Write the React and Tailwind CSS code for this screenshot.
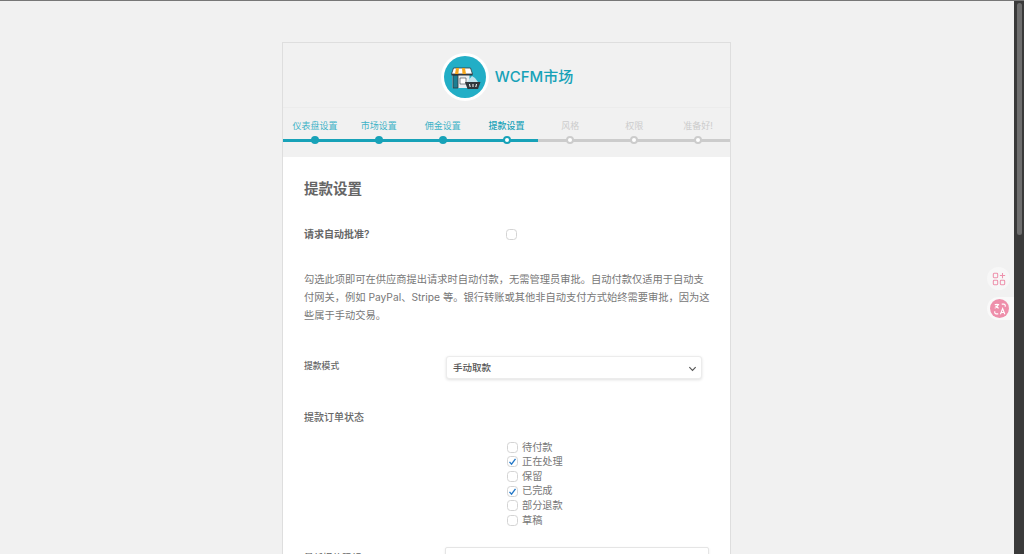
import React from "react";

const font = { fontFamily: '"Inter", "Noto Sans CJK SC", sans-serif' };

const steps = [
  { name: "仪表盘设置", state: "done" },
  { name: "市场设置", state: "done" },
  { name: "佣金设置", state: "done" },
  { name: "提款设置", state: "active" },
  { name: "风格", state: "todo" },
  { name: "权限", state: "todo" },
  { name: "准备好!", state: "todo" },
];

const statuses = [
  { name: "待付款", checked: false },
  { name: "正在处理", checked: true },
  { name: "保留", checked: false },
  { name: "已完成", checked: true },
  { name: "部分退款", checked: false },
  { name: "草稿", checked: false },
];

const Logo = () => (
  <svg viewBox="0 0 48 48" className="w-[48px] h-[48px] shrink-0">
    <circle cx="24" cy="24" r="24" fill="#ffffff" />
    <circle cx="24" cy="24" r="21" fill="#22aec6" />
    <path d="M11.500 22h17v13h-17z" fill="#e9edf0" />
    <path d="M12 22h5v13h-5z" fill="#1b7f93" stroke="#30383d" strokeWidth="0.8" />
    <path d="M19 25h6v6h-6z" fill="#ffffff" stroke="#30383d" strokeWidth="0.6" />
    <path d="M12.500 15h17l2 6h-21z" fill="#ffffff" stroke="#30383d" strokeWidth="0.8" />
    <path d="M15 15h3l-0.700 6h-3.300zM21 15h3l1 6h-3.500z" fill="#f5a81f" />
    <path d="M10.500 21h21v1.500h-21z" fill="#30383d" />
    <path d="M26 29l5-6 3 2 3 4z" fill="#bfe3ec" />
    <path d="M24 29h15.500l-2.500 7h-10.500z" fill="#30383d" />
    <path d="M28.500 31l0.700 3M32 31v3M35.500 31l-0.700 3" stroke="#ffffff" strokeWidth="1" fill="none" />
  </svg>
);

const Box = ({ checked }) => (
  <span className="w-[11px] h-[11px] rounded-[3.500px] border border-[#d4d4d4] bg-white shrink-0 flex items-center justify-center">
    {checked && (
      <svg viewBox="0 0 12 12" className="w-[9px] h-[9px]">
        <path d="M2 6.500l2.700 3L10 2.500" fill="none" stroke="#2378c8" strokeWidth="1.800" />
      </svg>
    )}
  </span>
);

const Step = ({ name, state }) => {
  const lit = state !== "todo";
  return (
    <div className="w-[64px] flex flex-col items-center">
      <div
        className={
          "h-[16px] leading-[16px] text-[9px] whitespace-nowrap " +
          (state === "active" ? "text-[#17a2b8] font-medium" : lit ? "text-[#3eb3c7]" : "text-[#cccccc]")
        }
      >
        {name}
      </div>
      <div className="relative w-full h-[8px] mt-[2px] flex items-center justify-center">
        <div className={"absolute left-0 right-0 h-[3px] " + (lit ? "bg-[#17a2b8]" : "bg-[#cccccc]")} />
        {state === "done" && <span className="relative w-[8px] h-[8px] rounded-full bg-[#17a2b8]" />}
        {state === "active" && <span className="relative w-[8px] h-[8px] rounded-full bg-white border-2 border-[#17a2b8]" />}
        {state === "todo" && <span className="relative w-[8px] h-[8px] rounded-full bg-white border-2 border-[#cccccc]" />}
      </div>
    </div>
  );
};

export default function App() {
  return (
    <div className="relative h-[554px] w-[1024px] overflow-hidden flex bg-[#f1f1f1] text-[#666666] border-t border-[#777777]" style={font}>
      <div className="flex-1 pt-[41px] flex justify-center">
        <div className="w-[449px] ml-[-1px] border border-[#dedede] border-b-0 flex flex-col">
          <div className="h-[65px] shrink-0 flex items-start pt-[10px] justify-center gap-[6px] pl-[1px] border-b border-[#ececec]">
            <Logo />
            <span className="text-[#17a2b8] text-[15px] leading-[48px] font-medium">WCFM市场</span>
          </div>

          <div className="h-[49px] shrink-0 flex pt-[10px]">
            {steps.map((s) => (
              <Step key={s.name} name={s.name} state={s.state} />
            ))}
          </div>

          <div className="flex-1 bg-white px-[21px] pt-[22px]">
            <h1 className="text-[14.500px] leading-[20px] font-semibold text-[#666666]">提款设置</h1>

            <div className="flex items-center h-[14px] mt-[28px]">
              <div className="w-[202px] text-[10px] font-semibold text-[#666666]">请求自动批准?</div>
              <Box />
            </div>

            <p className="mt-[29px] w-[406px] text-[10.250px] leading-[18px] text-[#777777]">
              勾选此项即可在供应商提出请求时自动付款，无需管理员审批。自动付款仅适用于自动支付网关，例如 PayPal、Stripe 等。银行转账或其他非自动支付方式始终需要审批，因为这些属于手动交易。
            </p>

            <div className="flex mt-[32px]">
              <div className="w-[142px] text-[8.800px] leading-[20px] font-medium text-[#666666]">提款模式</div>
              <div className="w-[256px] h-[23px] rounded-[3px] border border-[#ececec] shadow-[0_1px_3px_rgba(0,0,0,0.12)] bg-white flex items-center justify-between pl-[6px] pr-[4px] pt-[1px]">
                <span className="text-[9.500px] font-medium text-[#555555]">手动取款</span>
                <svg viewBox="0 0 10 10" className="w-[9px] h-[9px]">
                  <path d="M1.500 3.500L5 7l3.500-3.500" fill="none" stroke="#555555" strokeWidth="1.300" />
                </svg>
              </div>
            </div>

            <div className="mt-[30px] text-[10px] leading-[16px] font-medium text-[#666666]">提款订单状态</div>

            <div className="ml-[203px] mt-[15px] flex flex-col">
              {statuses.map((s) => (
                <label key={s.name} className="h-[14.600px] flex items-center gap-[4px] text-[10.200px] text-[#777777]">
                  <Box checked={s.checked} />
                  {s.name}
                </label>
              ))}
            </div>

            <div className="flex mt-[19px]">
              <div className="w-[142px] text-[9.500px] leading-[18px] pt-[2px] font-medium text-[#666666]">最低提款限额</div>
              <div className="w-[265px] h-[24px] rounded-[2px] border border-[#e5e5e5] shadow-[0_1px_3px_rgba(0,0,0,0.08)] bg-white" />
            </div>
          </div>
        </div>
      </div>

      <div className="w-[10px] bg-[#3a3a3a] flex justify-center pt-[2px]">
        <div className="w-[5px] h-[232px] rounded-full bg-[#6e6e6e]" />
      </div>

      <div className="absolute left-[987px] top-[266px] w-[23px] h-[23px] rounded-full bg-[#f7f7f7] flex items-center justify-center">
        <svg viewBox="0 0 16 16" className="w-[14px] h-[14px]" fill="none" stroke="#ee92ad" strokeWidth="1.200">
          <rect x="1.500" y="1.500" width="5" height="5" rx="1" />
          <rect x="1.500" y="9.500" width="5" height="5" rx="1" />
          <rect x="9.500" y="9.500" width="5" height="5" rx="1" />
          <path d="M12 1v6M9 4h6" />
        </svg>
      </div>
      <div className="absolute left-[987px] top-[296px] w-[27px] h-[23px] rounded-l-full bg-[#f9f9f9] flex items-center pl-[3px]">
        <div className="w-[19px] h-[19px] rounded-full bg-[#ee8fab] flex items-center justify-center">
          <svg viewBox="0 0 16 16" className="w-[14px] h-[14px]" fill="none" stroke="#ffffff" strokeWidth="1.300">
            <path d="M2 3h5M4.500 2v1M6 3c-.5 2-2 3.500-4 4M3 4.500c.7 1.200 2 2 3.500 2.500" />
            <path d="M8.500 14l2.500-6.500 2.500 6.500M9.500 12h3" />
            <path d="M10 2.500h2.500a1.500 1.500 0 0 1 1.500 1.500v1.500M6 13.500H3.500A1.500 1.500 0 0 1 2 12v-1.500" />
          </svg>
        </div>
      </div>
    </div>
  );
}
